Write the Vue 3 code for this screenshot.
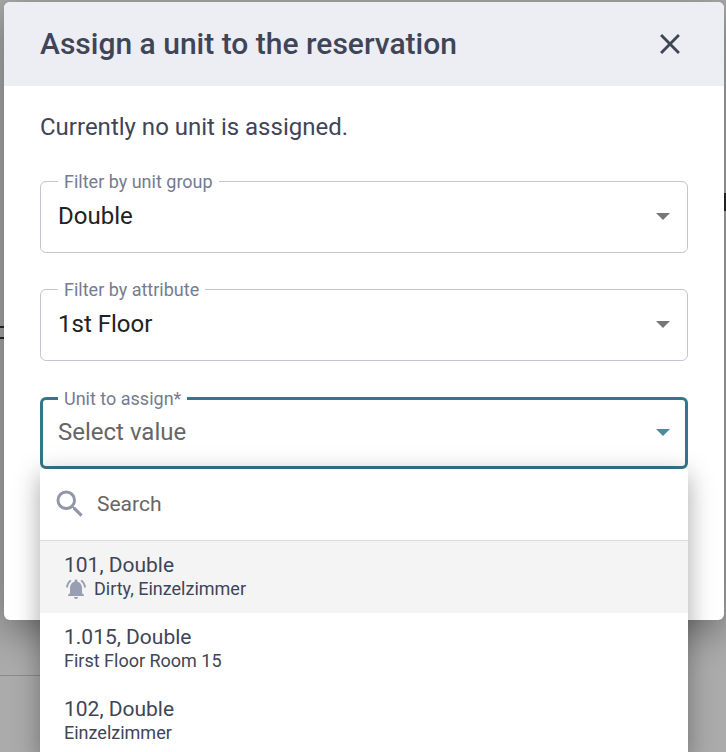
<template>
  <div class="page">
    <span class="bg-line"></span>
    <span class="bg-mark mark-right"></span>
    <span class="bg-mark mark-left-a"></span>
    <span class="bg-mark mark-left-b"></span>
    <div class="dialog">
      <div class="dialog-header">
        <h2>Assign a unit to the reservation</h2>
        <button class="close">
          <svg width="34" height="34" viewBox="0 0 24 24">
            <path d="M19 6.41 17.59 5 12 10.59 6.41 5 5 6.41 10.59 12 5 17.59 6.41 19 12 13.41 17.59 19 19 17.59 13.41 12z" fill="currentColor" />
          </svg>
        </button>
      </div>
      <div class="dialog-body">
        <p class="status">Currently no unit is assigned.</p>

        <fieldset class="field">
          <legend>Filter by unit group</legend>
          <span class="value">Double</span>
          <span class="arrow"></span>
        </fieldset>

        <fieldset class="field">
          <legend>Filter by attribute</legend>
          <span class="value">1st Floor</span>
          <span class="arrow"></span>
        </fieldset>

        <div class="select-wrap">
          <fieldset class="field focused">
            <legend>Unit to assign*</legend>
            <span class="value placeholder">Select value</span>
            <span class="arrow"></span>
          </fieldset>

          <div class="panel">
            <div class="search">
              <svg width="36" height="36" viewBox="0 0 24 24">
                <path d="M15.5 14h-.79l-.28-.27A6.47 6.47 0 0 0 16 9.5 6.5 6.5 0 1 0 9.5 16c1.61 0 3.09-.59 4.23-1.57l.27.28v.79l5 4.99L20.49 19l-4.99-5zm-6 0C7.01 14 5 11.99 5 9.5S7.01 5 9.5 5 14 7.01 14 9.5 11.99 14 9.5 14z" fill="currentColor" />
              </svg>
              <span>Search</span>
            </div>
            <div v-for="unit in units" :key="unit.name" class="option" :class="{ active: unit.active }">
              <div class="option-name">{{ unit.name }}</div>
              <div class="option-sub">
                <svg v-if="unit.alert" width="24" height="24" viewBox="0 0 24 24">
                  <path d="M7.58 4.08 6.15 2.65C3.75 4.48 2.17 7.3 2.03 10.5h2c.15-2.65 1.51-4.97 3.55-6.42zM19.97 10.5h2c-.15-3.2-1.73-6.02-4.12-7.85l-1.42 1.43c2.02 1.45 3.39 3.77 3.54 6.42zM18 11c0-3.07-1.64-5.64-4.5-6.32V4c0-.83-.67-1.5-1.5-1.5s-1.5.67-1.5 1.5v.68C7.63 5.36 6 7.92 6 11v5l-2 2v1h16v-1l-2-2v-5zm-6 11c.14 0 .27-.01.4-.04.65-.14 1.18-.58 1.44-1.18.1-.24.15-.5.15-.78h-4c.01 1.1.9 2 2.01 2z" fill="currentColor" />
                </svg>
                <span>{{ unit.sub }}</span>
              </div>
            </div>
          </div>
        </div>
      </div>
    </div>
  </div>
</template>

<script setup>
const units = [
  { name: "101, Double", sub: "Dirty, Einzelzimmer", alert: true, active: true },
  { name: "1.015, Double", sub: "First Floor Room 15" },
  { name: "102, Double", sub: "Einzelzimmer" },
];
</script>

<style>
html,
body {
  margin: 0;
  height: 100%;
  overflow: hidden;
}
</style>

<style scoped>
.page {
  position: relative;
  width: 726px;
  height: 752px;
  overflow: hidden;
  background: #ababab;
  padding: 2px 2px 0 4px;
  box-sizing: border-box;
  font-family: Roboto, "Liberation Sans", sans-serif;
  color: #3f4557;
}

.bg-line {
  position: absolute;
  left: 0;
  width: 60px;
  top: 675px;
  height: 1px;
  background: #8a8a8a;
}

.bg-mark {
  position: absolute;
  background: #2a2a2a;
}

.mark-right {
  right: 0;
  top: 193px;
  width: 2px;
  height: 18px;
}

.mark-left-a {
  left: 0;
  top: 326px;
  width: 4px;
  height: 2px;
}

.mark-left-b {
  left: 0;
  top: 337px;
  width: 4px;
  height: 2px;
}

.dialog {
  position: relative;
  height: 618px;
  background: white;
  border-radius: 6px;
  box-shadow: 0 10px 40px rgba(0, 0, 0, 0.4);
}

.dialog-header {
  display: flex;
  align-items: center;
  justify-content: space-between;
  height: 84px;
  padding: 0 37px 2px 36px;
  box-sizing: border-box;
  background: #eceef3;
  border-radius: 6px 6px 0 0;
}

.dialog-header h2 {
  margin: 0;
  font-size: 30px;
  font-weight: 500;
}

.close {
  display: flex;
  padding: 2px 0 0;
  border: none;
  background: transparent;
  color: #3f4557;
}

.dialog-body {
  padding: 26px 36px 0;
}

.status {
  margin: 0 0 30px;
  font-size: 24px;
  line-height: 30px;
}

.field {
  position: relative;
  display: flex;
  align-items: center;
  justify-content: space-between;
  height: 81px;
  margin: 0 0 27px;
  padding: 0 17px 11px;
  box-sizing: border-box;
  border: 1px solid #c3c5d3;
  border-radius: 6px;
}

.field legend {
  padding: 0 6px;
  font-size: 18px;
  line-height: 19px;
  color: #767b90;
}

.value {
  font-size: 24px;
  color: #222;
}

.placeholder {
  color: #666;
}

.arrow {
  border-left: 7px solid transparent;
  border-right: 7px solid transparent;
  border-top: 7px solid #777;
}

.select-wrap {
  position: relative;
  margin-top: 28px;
}

.focused {
  height: 80px;
  margin: 0;
  border: 3px solid #33778a;
  padding: 0 15px 10px;
}

.focused .arrow {
  border-top-color: #4a8c9c;
}

.panel {
  position: absolute;
  top: 80px;
  left: 0;
  right: 0;
  background: white;
  box-shadow: 0 6px 24px rgba(0, 0, 0, 0.35);
}

.search {
  display: flex;
  align-items: center;
  gap: 9px;
  height: 72px;
  padding: 0 12px 2px;
  box-sizing: border-box;
  border-bottom: 1px solid #d9dbe6;
  color: #9196a9;
}

.search span {
  font-size: 21px;
  color: #666;
}

.option {
  height: 72px;
  padding: 11px 24px 0;
  box-sizing: border-box;
}

.option.active {
  background: #f4f4f5;
}

.option-name {
  font-size: 21px;
  line-height: 26px;
}

.option-sub {
  display: flex;
  align-items: center;
  gap: 6px;
  font-size: 18px;
  line-height: 22px;
}

.option-sub svg {
  margin: -1px 0;
  color: #9a9eb2;
}
</style>
